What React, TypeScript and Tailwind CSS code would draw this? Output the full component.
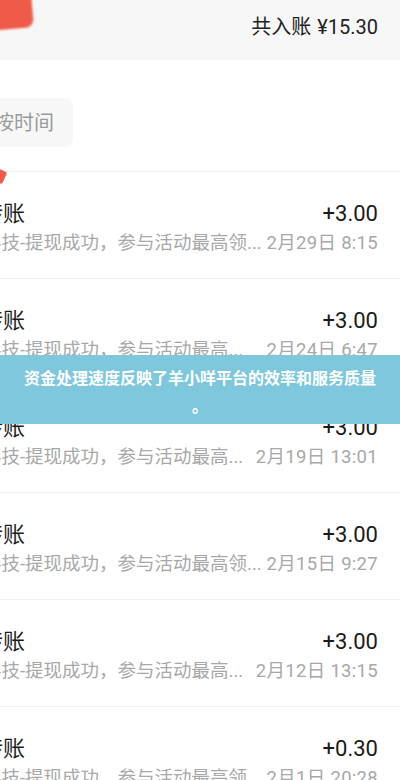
import React from "react";

const rows = [
  { amt: "+3.00", desc: "科技-提现成功，参与活动最高领...", date: "2月29日 8:15" },
  { amt: "+3.00", desc: "科技-提现成功，参与活动最高...", date: "2月24日 6:47" },
  { amt: "+3.00", desc: "科技-提现成功，参与活动最高...", date: "2月19日 13:01" },
  { amt: "+3.00", desc: "科技-提现成功，参与活动最高领...", date: "2月15日 9:27" },
  { amt: "+3.00", desc: "科技-提现成功，参与活动最高...", date: "2月12日 13:15" },
  { amt: "+0.30", desc: "科技-提现成功，参与活动最高领...", date: "2月1日 20:28" },
];

export default function App() {
  return (
    <div className="relative w-[400px] h-[780px] overflow-hidden bg-white font-[Roboto,'Noto_Sans_CJK_SC',sans-serif]">
      {/* header */}
      <div className="h-[60px] bg-[#f7f7f7] flex items-start justify-between pr-[22px] overflow-hidden">
        <div className="w-[44px] h-[46px] -ml-[12px] -mt-[17px] bg-[#ee5b48] rounded-[8px] rotate-[-5deg] blur-[1px]" />
        <div className="mt-[13px] text-[20px] leading-[28px] text-[#222222]">
          共入账<span className="ml-[6px]">¥15.30</span>
        </div>
      </div>

      {/* chip */}
      <div className="mt-[38px] -ml-[25px] w-fit h-[49px] px-[19px] rounded-[8px] bg-[#f7f7f7] flex items-center text-[20px] text-[#9a9a9a]">
        按时间
      </div>

      {/* list */}
      <div className="mt-[24px]">
        {rows.map((r, i) => (
          <div key={i} className="relative -ml-[19px] pr-[22px] border-t border-[#f0f0f0] pt-[27px] pb-[22px]">
            {i === 0 && (
              <div className="absolute left-[15px] -top-[2px] w-[9px] h-[13px] bg-[#ee5b48] rounded-[2px] rotate-[25deg] blur-[0.5px]" />
            )}
            <div className="flex items-center justify-between h-[30px]">
              <span className="text-[22px] leading-[30px] text-[#1c1c1c]">转账</span>
              <span className="text-[22px] leading-[30px] text-[#1a1a1a]">{r.amt}</span>
            </div>
            <div className="mt-[1px] flex items-center justify-between h-[26px] text-[18.5px] leading-[26px] text-[#a8a8a8] whitespace-nowrap">
              <span className="ml-[2px]">{r.desc}</span>
              <span className="tracking-[0.3px]">{r.date}</span>
            </div>
          </div>
        ))}
      </div>

      {/* banner overlay */}
      <div className="absolute top-[355px] left-0 w-full bg-[#7ec7dd] px-[20px] pt-[10px] pb-[3px] text-center text-white font-bold text-[16px] leading-[28px]">
        资金处理速度反映了羊小咩平台的效率和服务质量
        <br />。
      </div>
    </div>
  );
}
